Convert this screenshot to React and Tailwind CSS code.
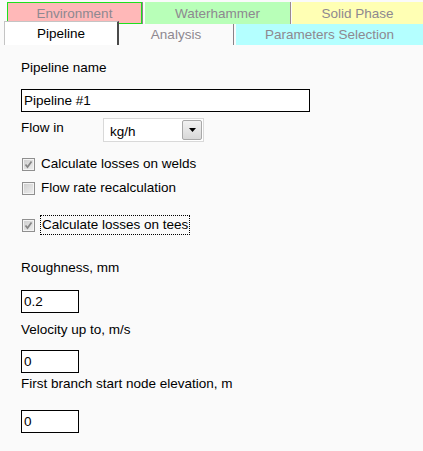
import React from "react";

function Check({ checked }) {
  return (
    <div className="w-[13px] h-[13px] border border-[#8f8f8f] bg-[#f4f4f4] p-[1px] shrink-0">
      <div className="w-full h-full bg-gradient-to-br from-[#d0d0d0] to-[#ececec] flex items-center justify-center">
        {checked && (
          <svg width="9" height="9" viewBox="0 0 9 9">
            <path d="M1.5 4.5 L3.5 7 L7.5 1.5" fill="none" stroke="#858585" strokeWidth="1.7" />
          </svg>
        )}
      </div>
    </div>
  );
}

function Input({ value, w }) {
  return (
    <div className={`${w} h-[23px] border border-black bg-white pl-[2px] flex items-center leading-[15px]`}>
      {value}
    </div>
  );
}

export default function App() {
  return (
    <div
      className="w-[423px] h-[451px] bg-[#fafafa] text-[13.5px] text-black overflow-hidden"
      style={{ fontFamily: '"Liberation Sans", Arial, sans-serif' }}
    >
      {/* tab row 1 */}
      <div className="flex pt-[2px] h-[24px] relative z-0">
        <div className="ml-[7px] w-[135px] h-[22px] bg-[#ffb8b8] border border-[#1ee01e] flex items-center justify-center text-[#8e8890] leading-[15px]">
          Environment
        </div>
        <div className="w-[1px] h-[22px] bg-[#8a8288]"></div>
        <div className="ml-[2px] w-[145px] h-[22px] bg-[#b8ffb8] flex items-center justify-center text-[#8e8890] leading-[15px]">
          Waterhammer
        </div>
        <div className="w-[1px] h-[22px] bg-[#9a8890]"></div>
        <div className="ml-[1px] flex-1 h-[22px] bg-[#ffffb4] flex items-center justify-center text-[#8e8890] leading-[15px]">
          Solid Phase
        </div>
      </div>
      {/* tab row 2 */}
      <div className="flex -mt-[3px] h-[24px] relative z-10">
        <div className="ml-[4px] w-[115px] h-[24px] bg-white border-l border-t border-[#c4c4c4] border-r-2 border-r-[#4a4a4a] flex items-center justify-center leading-[15px]">
          Pipeline
        </div>
        <div className="w-[114px] h-[24px] flex items-center justify-center text-[#8e8890] leading-[15px] pt-[2px]">
          Analysis
        </div>
        <div className="mt-[3px] w-[1px] h-[21px] bg-[#8a8288]"></div>
        <div className="ml-[2px] mt-[3px] flex-1 h-[21px] bg-[#b4ffff] flex items-center justify-center text-[#8e8890] leading-[15px]">
          Parameters Selection
        </div>
      </div>

      {/* content */}
      <div className="pl-[21px] leading-[15px]">
        <div className="mt-[15px]">Pipeline name</div>
        <div className="mt-[14px]">
          <Input value="Pipeline #1" w="w-[289px]" />
        </div>
        <div className="mt-[6px] flex items-start">
          <div className="mt-[2px] w-[82px]">Flow in</div>
          <div className="w-[101px] h-[24px] border border-[#d9d9d9] bg-white flex items-center justify-between pl-[6px] pr-[1px]">
            <span className="mt-[2px]">kg/h</span>
            <div className="w-[20px] h-[20px] border border-[#a8a8a8] rounded-[2px] bg-gradient-to-b from-[#f2f2f2] to-[#d8d8d8] flex items-center justify-center">
              <svg width="7" height="4" viewBox="0 0 7 4">
                <path d="M0 0 H7 L3.5 4 Z" fill="#000" />
              </svg>
            </div>
          </div>
        </div>

        <div className="mt-[14px] flex items-start h-[15px]">
          <div className="mt-[2px] ml-[1px]">
            <Check checked />
          </div>
          <span className="ml-[6px]">Calculate losses on welds</span>
        </div>
        <div className="mt-[9px] flex items-start h-[15px]">
          <div className="mt-[2px] ml-[1px]">
            <Check />
          </div>
          <span className="ml-[6px]">Flow rate recalculation</span>
        </div>
        <div className="mt-[20px] flex items-center h-[20px]">
          <div className="ml-[1px]">
            <Check checked />
          </div>
          <span className="ml-[5px] border border-dotted border-black leading-[18px] pl-[1px] pr-[1px]">
            Calculate losses on tees
          </span>
        </div>

        <div className="mt-[25px]">Roughness, mm</div>
        <div className="mt-[15px]">
          <Input value="0.2" w="w-[58px]" />
        </div>
        <div className="mt-[9px]">Velocity up to, m/s</div>
        <div className="mt-[13px]">
          <Input value="0" w="w-[58px]" />
        </div>
        <div className="mt-[3px]">First branch start node elevation, m</div>
        <div className="mt-[19px]">
          <Input value="0" w="w-[58px]" />
        </div>
      </div>
    </div>
  );
}
